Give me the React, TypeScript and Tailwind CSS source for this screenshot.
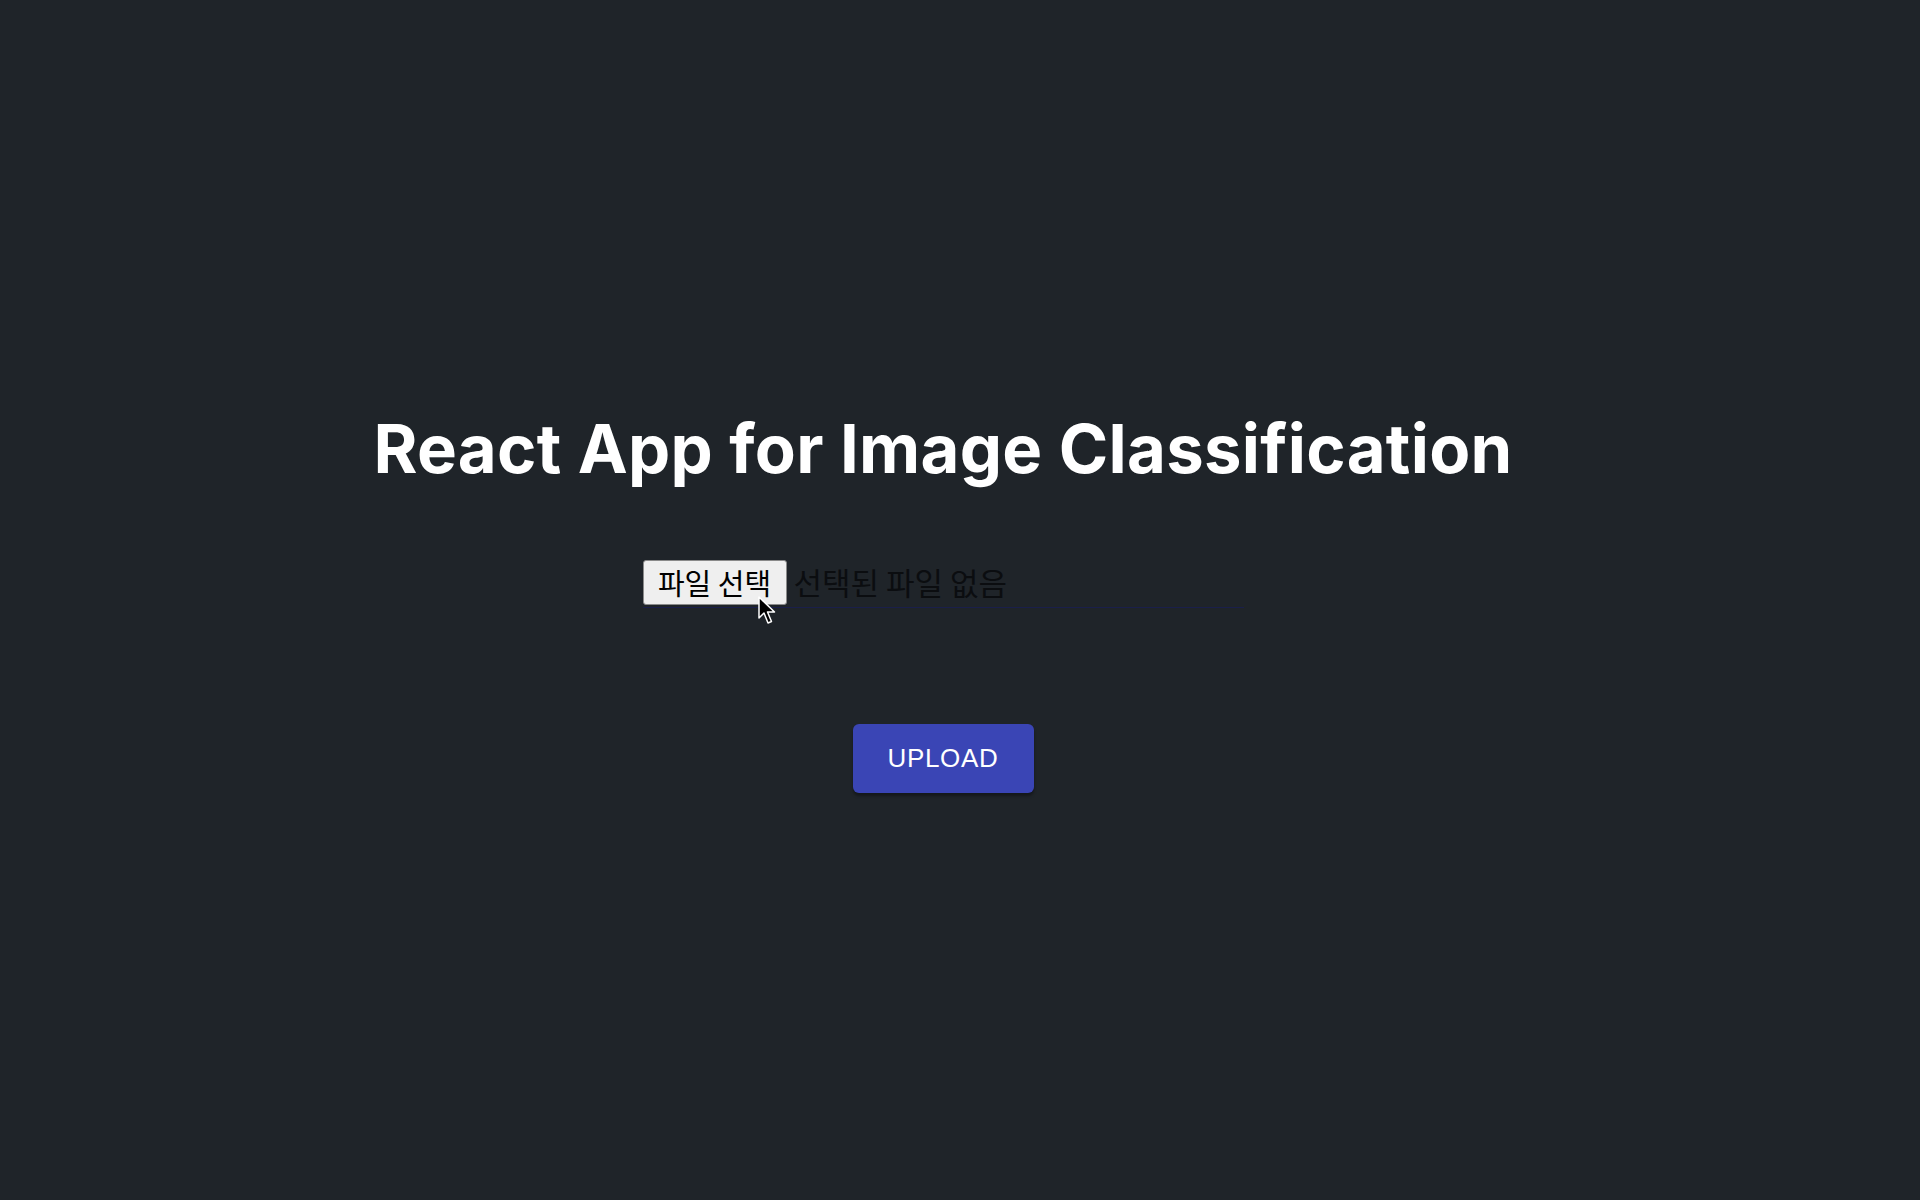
import React from "react";

export default function App() {
  return (
    <div className="min-h-screen w-full bg-[#1f2429] flex flex-col items-center pr-[34px]">
      <h1 className="mt-[415px] text-[67px] leading-[67px] font-bold text-white tracking-[0.3px] font-['Inter','Liberation_Sans',sans-serif]">
        React App for Image Classification
      </h1>
      <div className="relative mt-[78px] w-[601px] h-[48px] border-b border-[#1a1f4a] flex items-start font-['Noto_Sans_CJK_KR',sans-serif]">
        <div className="h-[45px] w-[144px] bg-[#efefef] border border-[#8a8a8a] rounded-[3px] flex items-center justify-center text-[29px] font-normal text-black">
          파일 선택
        </div>
        <div className="ml-[7px] h-[45px] flex items-center text-[31px] font-normal text-[#0b0d10]">
          선택된 파일 없음
        </div>
        <svg
          className="absolute left-[115px] top-[36px]"
          width="20"
          height="30"
          viewBox="0 0 20 30"
        >
          <path
            d="M1 1 L1 22 L6 17 L10 27 L13.5 25.5 L9.5 16 L16.5 16 Z"
            fill="#000"
            stroke="#fff"
            strokeWidth="1.5"
            strokeLinejoin="round"
          />
        </svg>
      </div>
      <button className="mt-[116px] w-[181px] h-[69px] rounded-[6px] bg-[#3a45b5] text-white text-[26px] tracking-[0.7px] shadow-[0_3px_3px_rgba(0,0,0,0.35)] font-['Liberation_Sans',Arial,sans-serif]">
        UPLOAD
      </button>
    </div>
  );
}
